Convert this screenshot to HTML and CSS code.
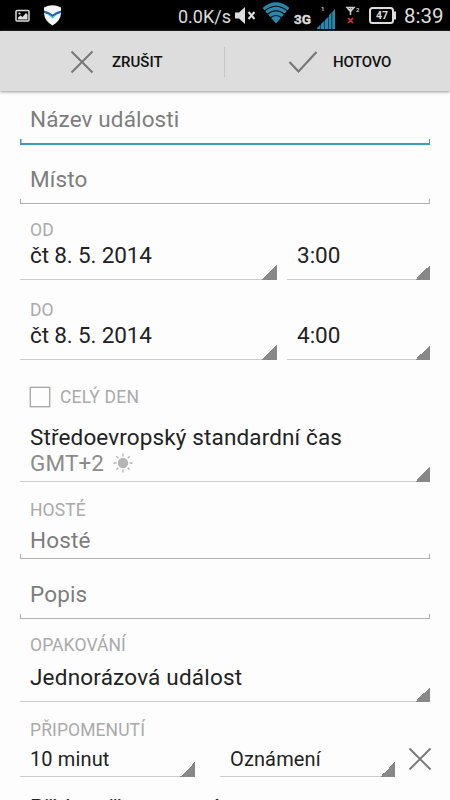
FILE: index.html
```html
<!DOCTYPE html>
<html lang="cs">
<head>
<meta charset="utf-8">
<title>Událost</title>
<link rel="stylesheet" href="styles.css">
</head>
<body>
<div class="screen">
  <header class="status">
    <svg class="notifications" width="80" height="31" viewBox="0 0 80 31">
      <rect x="16" y="10.500" width="13" height="10.500" rx="1" fill="none" stroke="#ddd" stroke-width="1.500"/>
      <path d="M18 19.500v-2l2.500-2 2 1.500 3.500-4 1.500 1.500v5z" fill="#ddd"/><circle cx="19.500" cy="13.500" r="1.100" fill="#ddd"/>
      <path d="M44 7.500Q52.500 3 61 7.500v6Q60.500 21 52.500 25.500 44.500 21 44 13.500z" fill="#f2f6f8"/>
      <path d="M44 10.500q4.500 1 8.500 4 4-3 8.500-4v2.500q-4.500 1-8.500 4-4-3-8.500-4z" fill="#2164ac"/>
      <path d="M47.500 14.500q3 .5 5 2.500 2-2 5-2.500-2.500 1.500-5 4-2.500-2.500-5-4z" fill="#2dc8dc"/>
    </svg>
    <span class="speed">0.0K/s</span>
    <svg class="signals" width="172" height="31" viewBox="230 0 172 31">
      <path d="M235 12.500h4l6-5.500v17l-6-5.500h-4z" fill="#ddd"/>
      <path d="m248.500 12 6 7m0-7-6 7" stroke="#ddd" stroke-width="2"/>
      <path d="M276 23.500 262.500 8Q276-3.500 289.500 8z" fill="#2789ae"/>
      <path d="M264.500 11q11.500-9.500 23 0M267 14.500q9-7.500 18 0M270 18q6-5 12 0" fill="none" stroke="#000" stroke-width="1.200"/>
      <text x="294" y="23.500" class="net">3G</text>
      <text x="321" y="11" class="sim">1</text>
      <path d="M317 29v-1l3.500-3.500V29zm4 0v-5l3.500-3.500V29zm4 0v-9l3.500-3.500V29zm4 0V15l6-6v20z" fill="#2789ae"/>
      <path d="M331.800 8v21" stroke="#000" stroke-width=".6"/>
      <path d="M347 7.500h7l-3.500 4zM350.500 8v7" fill="none" stroke="#ccc" stroke-width="1.500"/>
      <text x="356" y="12" class="sim">2</text>
      <path d="m348 18 5 5m0-5-5 5" stroke="#e32d35" stroke-width="1.700"/>
      <rect x="370" y="8" width="23" height="15" rx="2.500" fill="none" stroke="#ddd" stroke-width="2"/>
      <path d="M393 11.500h3v8h-3z" fill="#ddd"/>
      <text x="382" y="19.300" text-anchor="middle" class="charge">47</text>
    </svg>
    <span class="clock">8:39</span>
  </header>

  <nav class="actions">
    <button class="action cancel">
      <svg width="24" height="24" viewBox="0 0 24 24"><path d="m1.500 1.500 21 21m0-21-21 21" stroke="#777" stroke-width="2"/></svg>
      <span>ZRUŠIT</span>
    </button>
    <button class="action done">
      <svg width="30" height="24" viewBox="0 0 30 24"><path d="m1.500 12 9 9.500L28.500 2" fill="none" stroke="#777" stroke-width="2.200"/></svg>
      <span>HOTOVO</span>
    </button>
  </nav>

  <main class="form">
    <div class="field focus title"><span>Název události</span></div>
    <div class="field place"><span>Místo</span></div>

    <div class="label">OD</div>
    <div class="pair">
      <div class="spinner date"><span>čt 8. 5. 2014</span></div>
      <div class="spinner time"><span>3:00</span></div>
    </div>
    <div class="label to">DO</div>
    <div class="pair">
      <div class="spinner date"><span>čt 8. 5. 2014</span></div>
      <div class="spinner time"><span>4:00</span></div>
    </div>

    <div class="allday"><i class="box"></i><span>CELÝ DEN</span></div>
    <div class="spinner zone">
      <span class="zone-name">Středoevropský standardní čas</span>
      <div class="offset"><span>GMT+2</span>
        <svg width="20" height="20" viewBox="0 0 20 20"><circle cx="10" cy="10" r="5.200" fill="#b5b5b5"/><path d="M10 .5v3M10 16.500v3M.5 10h3M16.500 10h3M3.300 3.300l2 2M14.700 14.700l2 2M3.300 16.700l2-2M14.700 5.300l2-2" stroke="#b5b5b5" stroke-width="1.300"/></svg>
      </div>
    </div>

    <div class="label guests-label">HOSTÉ</div>
    <div class="field guests"><span>Hosté</span></div>
    <div class="field note"><span>Popis</span></div>

    <div class="label repeat-label">OPAKOVÁNÍ</div>
    <div class="spinner repeat"><span>Jednorázová událost</span></div>

    <div class="label remind-label">PŘIPOMENUTÍ</div>
    <div class="reminder">
      <div class="spinner"><span>10 minut</span></div>
      <div class="spinner"><span>Oznámení</span></div>
      <svg width="24" height="24" viewBox="0 0 24 24"><path d="m1.500 1.500 21 21m0-21-21 21" stroke="#777" stroke-width="1.900"/></svg>
    </div>
    <div class="add">Přidat připomenutí</div>
  </main>
</div>
</body>
</html>
```
FILE: styles.css
```css
* { box-sizing: border-box; }
body { margin: 0; font-family: Roboto, sans-serif; }
.screen { width: 450px; height: 800px; overflow: hidden; background: #fdfdfd; }

.status { display: flex; height: 31px; background: #000; color: #ddd; }
.notifications { flex: none; margin-right: 98px; }
.speed { width: 52px; font-size: 18px; line-height: 33px; white-space: nowrap; }
.signals { flex: none; }
.clock { margin-left: 2px; font-size: 20.5px; line-height: 33px; }
.net { font: bold 13.5px Roboto, sans-serif; fill: #ddd; stroke: #ddd; stroke-width: .4px; }
.sim { font: bold 6px Roboto, sans-serif; fill: #ccc; }
.charge { font: bold 10.5px Roboto, sans-serif; fill: #ddd; }

.actions { display: flex; height: 60px; background: #ddd; box-shadow: 0 1px 3px #999; position: relative; }
.action { display: flex; align-items: center; border: 0; padding: 0; background: none; color: #111; font: 500 15px Roboto, sans-serif; height: 62px; }
.cancel { width: 224px; padding-left: 70px; gap: 18px; }
.done { flex: 1; }
.done::before { content: ""; width: 1px; height: 30px; margin-right: 63px; background: #c6c6c6; }
.done span { margin-left: 15px; letter-spacing: -.25px; }

.form { padding: 0 20px; font-size: 22.5px; color: #222; }
.form span { display: block; white-space: nowrap; letter-spacing: .13px; }

.field { display: flex; align-items: flex-end; padding-left: 10px; color: #7d7d7d; line-height: 26px;
  background: linear-gradient(#b0b0b0, #b0b0b0) 0 100% / 100% 1px no-repeat,
    linear-gradient(#b0b0b0, #b0b0b0) 0 100% / 1px 5px no-repeat,
    linear-gradient(#b0b0b0, #b0b0b0) 100% 100% / 1px 5px no-repeat; }
.focus { background: linear-gradient(#3a9fbf, #3a9fbf) 0 100% / 100% 2px no-repeat,
    linear-gradient(#3a9fbf, #3a9fbf) 0 100% / 1.5px 6px no-repeat,
    linear-gradient(#3a9fbf, #3a9fbf) 100% 100% / 1.5px 6px no-repeat; }
.title { height: 54px; padding-bottom: 13px; }
.place { height: 59px; padding-bottom: 12px; }
.guests { height: 41px; padding-bottom: 6px; }
.note { height: 60px; padding-bottom: 12px; }

.label { height: 38px; padding: 16px 0 0 10px; font-size: 17.5px; line-height: 21px; color: #aaa; letter-spacing: .1px; }
.to { height: 42px; padding-top: 20px; }
.guests-label { padding-top: 18px; height: 36px; }
.repeat-label { padding-top: 16px; height: 36px; }
.remind-label { padding-top: 18px; height: 40px; }

.spinner { padding-left: 10px; line-height: 26px;
  background: linear-gradient(135deg, transparent 50%, #888 50%) 100% 100% / 15px 15px no-repeat,
    linear-gradient(#ccc, #ccc) 0 100% / 100% 1px no-repeat; }
.pair { display: grid; grid-template-columns: 257px 143px; gap: 10px; }
.pair .spinner { height: 38px; }
.form .date span { letter-spacing: -.15px; }
.form .time span { letter-spacing: 0; }

.allday { display: flex; align-items: center; gap: 10px; height: 74px; padding-left: 10px; font-size: 17.5px; color: #aaa; }
.form .allday span { letter-spacing: .2px; }
.box { width: 20px; height: 20px; border: 1.5px solid #aaa; box-shadow: 0 0 0 .5px #bbb; }
.zone { height: 58px; margin-top: -10px; }
.offset { display: flex; gap: 9px; align-items: center; color: #8c8c8c; }
.repeat { height: 47px; padding-top: 9px; }
.form .repeat span { letter-spacing: .2px; }
.reminder { display: grid; grid-template-columns: 175px 175px 24px; column-gap: 25px; font-size: 20px; }
.reminder .spinner { height: 35px; padding-top: 5px; line-height: 24px; }
.reminder svg { margin: 5px 0 0 -12px; }
.add { padding: 17px 0 0 10px; line-height: 26px; letter-spacing: .13px; }
```
